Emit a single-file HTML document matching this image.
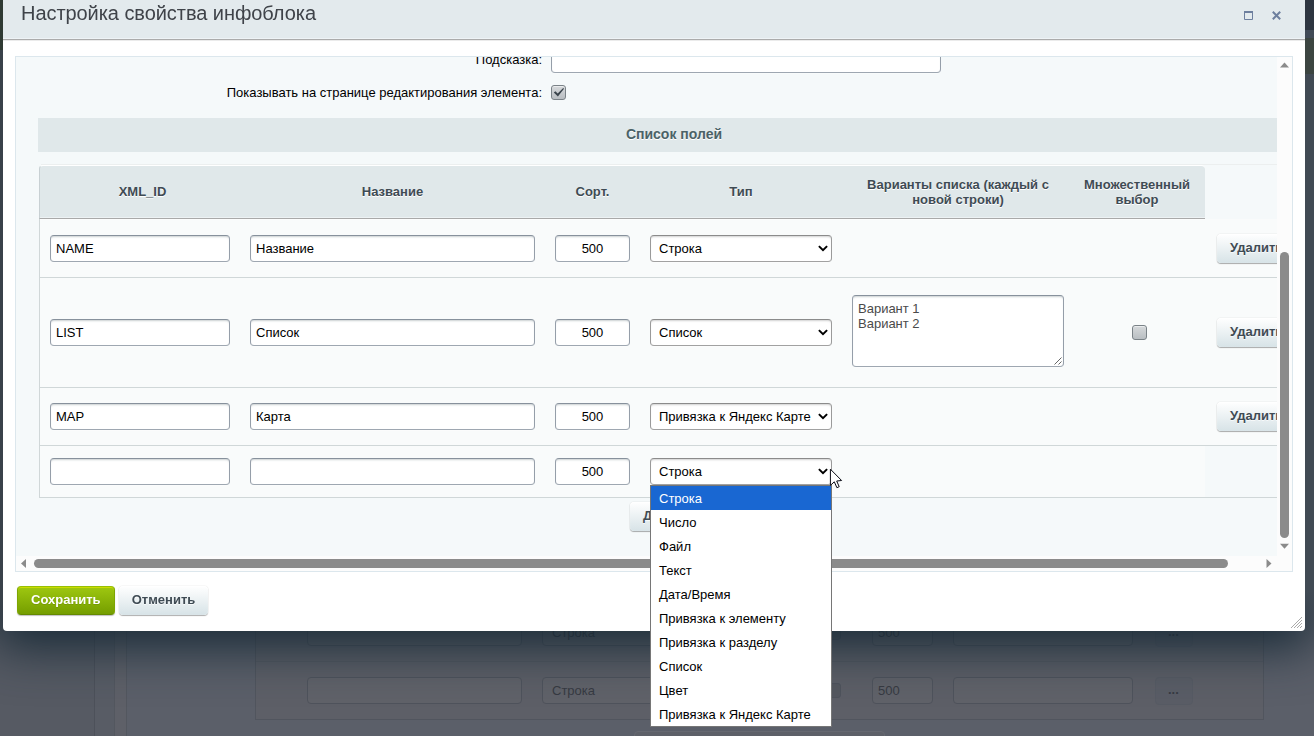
<!DOCTYPE html>
<html lang="ru">
<head>
<meta charset="utf-8">
<title>Настройка свойства инфоблока</title>
<style>
*{box-sizing:border-box;}
html,body{margin:0;padding:0;}
body{width:1314px;height:736px;overflow:hidden;position:relative;background:#5b5f69;font-family:"Liberation Sans",sans-serif;font-size:13px;color:#000;}
.abs{position:absolute;}
/* dimmed page behind */
#bgpage{position:absolute;left:0;top:0;width:1314px;height:736px;overflow:hidden;}
#bgpage .ghost{position:absolute;border:1px solid #4f535c;border-radius:4px;background:#606269;}
#bgpage .gtxt{position:absolute;color:#373a42;font-size:13px;line-height:15px;white-space:nowrap;}
/* dialog */
#dlg{position:absolute;left:3px;top:-20px;width:1302px;height:651px;background:#fff;border-radius:4px;box-shadow:0 8px 50px 8px rgba(24,42,55,1);}
#head{position:absolute;left:0;top:0;width:1302px;height:60px;background:#e3eaed;border-bottom:1px solid #ababab;border-radius:4px 4px 0 0;box-shadow:inset 0 -1px 0 #eef3f6,0 1px 0 #ebebeb;}
#title{position:absolute;left:18px;top:20px;letter-spacing:-0.06px;font-size:20px;line-height:26px;color:#3f4349;white-space:nowrap;}
#content{position:absolute;left:12px;top:76px;width:1278px;height:516px;border:1px solid #dce7ed;background:#f5f9fa;overflow:hidden;}
#inner{position:absolute;left:0;top:0;width:1261px;height:499px;overflow:hidden;}
.inp{position:absolute;height:27px;background:#fff;border:1px solid;border-color:#87919c #959ea9 #9ea7b1 #959ea9;border-radius:4px;box-shadow:0 1px 0 0 rgba(255,255,255,.3),inset 0 2px 2px -1px rgba(180,188,191,.7);font-size:13px;line-height:25px;padding:0 5px;white-space:nowrap;overflow:hidden;color:#000;}
.lbl{position:absolute;white-space:nowrap;font-size:13px;line-height:15px;color:#000;text-align:right;}
.btn{position:absolute;height:29px;border-radius:4px;background:linear-gradient(to bottom,#fff,#d7e3e7);box-shadow:0 0 1px rgba(0,0,0,.3),0 1px 1px rgba(0,0,0,.3),inset 0 1px #fff,inset 0 0 1px rgba(255,255,255,.5);color:#3f4b54;font-weight:bold;font-size:13px;line-height:27px;padding:0 13px;text-shadow:0 1px rgba(255,255,255,.7);white-space:nowrap;}
.hcell{position:absolute;top:0;height:52px;display:flex;align-items:center;justify-content:center;text-align:center;font-weight:bold;font-size:13px;line-height:15px;color:#3f4b54;text-shadow:0 1px #fff;}
.rowline{position:absolute;left:24px;height:1px;background:#d0d7d8;}
.cellbg{position:absolute;background:#f9fbfb;}
.chev{position:absolute;width:10px;height:7px;}

.cb{position:absolute;width:15px;height:15px;border-radius:3px;border:1px solid #7a8287;background:linear-gradient(to bottom,#d6d9db,#b9bec2);box-shadow:inset 0 1px 0 rgba(255,255,255,.5);}
.cb svg{position:absolute;left:-1px;top:-1px;}
.band{position:absolute;background:#e0e8ea;color:#4b6267;font-weight:bold;font-size:14px;line-height:32px;text-align:center;text-shadow:0 1px #fff;}
.sel{padding-left:8px;border-color:#8b8b8b #9a9a9a #a1a1a1 #9a9a9a;box-shadow:0 1px 0 0 rgba(255,255,255,.3),inset 0 2px 2px -1px rgba(190,190,190,.7);}
.sel .chev{right:3.3px;top:9px;}
.ta{white-space:normal;line-height:15px;padding:5px 5px;color:#4a4a4a;}
.ta .grip{position:absolute;right:1px;bottom:1px;}
.sbar{position:absolute;background:#fcfcfc;}
.thumb{position:absolute;background:#8b8b8b;border-radius:4.5px;}
#dd{position:absolute;left:650px;top:485px;width:182px;height:242px;border:1px solid #767676;background:#fff;font-size:13px;}
#dd div{height:24px;line-height:26px;padding-left:8px;white-space:nowrap;color:#000;}
#dd div.hl{background:#1967d2;color:#fff;}
.btnsave{position:absolute;height:29px;border-radius:4px;border:1px solid;border-color:#97c004 #7ea502 #648900;background:linear-gradient(to bottom,#9ec710,#759e00);box-shadow:0 1px 1px rgba(0,0,0,.25),inset 0 1px 0 #cbdc00;color:#fff;font-weight:bold;font-size:13px;line-height:26px;padding:0 13px;text-shadow:0 1px rgba(0,0,0,.1);white-space:nowrap;}
</style>
</head>
<body>
<div id="bgpage">
  <div class="abs" style="left:0;top:0;width:94px;height:736px;background:#565a63;"></div>
  <div class="abs" style="left:94px;top:0;width:21px;height:736px;background:#585c65;border-left:1px solid #4d515a;"></div>
  <div class="abs" style="left:114px;top:0;width:13px;height:736px;background:#5e6068;border-left:1px solid #53575f;border-right:1px solid #53575f;"></div>
  <div class="abs" style="left:255px;top:560px;width:1009px;height:160px;border:1px solid #51555e;background:#5d5f67;"></div>
  <div class="abs" style="left:256px;top:661px;width:1007px;height:1px;background:#575a62;"></div>
  <div class="ghost" style="left:307px;top:619px;width:215px;height:27px;"></div>
  <div class="ghost" style="left:542px;top:619px;width:290px;height:27px;"></div>
  <div class="gtxt" style="left:552px;top:625px;">Строка</div>
  <div class="ghost" style="left:872px;top:619px;width:61px;height:27px;"></div>
  <div class="gtxt" style="left:878px;top:625px;">500</div>
  <div class="ghost" style="left:953px;top:619px;width:180px;height:27px;"></div>
  <div class="ghost" style="left:1155px;top:619px;width:38px;height:28px;background:#5a5d66;border-color:#575b64;"></div>
  <div class="gtxt" style="left:1168px;top:624px;font-weight:bold;">...</div>
  <div class="ghost" style="left:307px;top:677px;width:215px;height:27px;"></div>
  <div class="ghost" style="left:542px;top:677px;width:290px;height:27px;"></div>
  <div class="gtxt" style="left:552px;top:683px;">Строка</div>
  <div class="ghost" style="left:872px;top:677px;width:61px;height:27px;"></div>
  <div class="gtxt" style="left:878px;top:683px;">500</div>
  <div class="ghost" style="left:953px;top:677px;width:180px;height:27px;"></div>
  <div class="ghost" style="left:1155px;top:677px;width:38px;height:28px;background:#5a5d66;border-color:#575b64;"></div>
  <div class="gtxt" style="left:1168px;top:682px;font-weight:bold;">...</div>
  <div class="ghost" style="left:634px;top:731px;width:251px;height:29px;background:#5d6068;border-color:#656870;"></div>
  <div class="ghost" style="left:826px;top:683px;width:15px;height:15px;border-radius:3px;background:#55585f;"></div>
  <div class="ghost" style="left:826px;top:625px;width:15px;height:15px;border-radius:3px;background:#55585f;"></div>
</div>
<div id="dlg">
  <div id="head">
    <div id="title" style="will-change:transform;">Настройка свойства инфоблока</div>
  </div>
  <div id="content">
    <div id="inner">
    <div class="lbl" style="left:0;width:526px;top:-5px;">Подсказка:</div>
    <div class="inp" style="left:535px;top:-11px;width:390px;"></div>
    <div class="lbl" style="left:0;width:526px;top:28px;">Показывать на странице редактирования элемента:</div>
    <div class="cb on" style="left:535px;top:28px;"><svg width="15" height="15" viewBox="0 0 15 15"><path d="M2.8 7.6 L4.4 6.3 L6.7 8.5 L12.2 3.0 L13.0 3.8 L6.9 11.4 Z" fill="#3a444c"/></svg></div>
    <div class="band" style="left:22px;top:61px;width:1272px;height:34px;">Список полей</div>
    <div class="abs" style="left:25px;top:107px;width:1280px;height:1px;background:#ecefef;"></div>
    <div class="cellbg" style="left:24px;top:162px;width:1280px;height:226px;"></div>
    <div class="cellbg" style="left:24px;top:389px;width:1165px;height:51px;"></div>
    <div class="abs" style="left:23px;top:108px;width:1166px;height:54px;background:#e0e8ea;border-radius:4px 4px 0 0;border-top:1px solid #fff;border-left:1px solid #c8d0d3;border-bottom:1px solid #a9a9a9;box-shadow:inset 0 -1px 0 #edf2f4,0 1px 0 #fcfdfd;"></div>
    <div class="hcell" style="left:26.5px;top:108px;width:200px;height:53px;">XML_ID</div>
    <div class="hcell" style="left:224px;top:108px;width:305px;height:53px;">Название</div>
    <div class="hcell" style="left:529px;top:108px;width:95px;height:53px;">Сорт.</div>
    <div class="hcell" style="left:624px;top:108px;width:202px;height:53px;">Тип</div>
    <div class="hcell" style="left:826px;top:108px;width:232px;height:53px;">Варианты списка (каждый с<br>новой строки)</div>
    <div class="hcell" style="left:1058px;top:108px;width:126px;height:53px;">Множественный<br>выбор</div>
    <div class="abs" style="left:23px;top:162px;width:1px;height:279px;background:#d0d7d8;"></div>
    <div class="rowline" style="left:23px;top:220px;width:1280px;"></div>
    <div class="rowline" style="left:23px;top:330px;width:1280px;"></div>
    <div class="rowline" style="left:23px;top:388px;width:1280px;"></div>
    <div class="rowline" style="left:23px;top:440px;width:1280px;"></div>
    <div class="inp" style="left:34px;top:178px;width:180px;">NAME</div>
    <div class="inp" style="left:234px;top:178px;width:285px;">Название</div>
    <div class="inp" style="left:539px;top:178px;width:75px;text-align:center;">500</div>
    <div class="inp sel" style="left:634px;top:178px;width:182px;">Строка<svg class="chev" viewBox="0 0 10 7"><path d="M0.9 1.1 L5 5.2 L9.1 1.1" fill="none" stroke="#000" stroke-width="2"/></svg></div>
    <div class="btn" style="left:1201px;top:177px;">Удалить</div>
    <div class="inp" style="left:34px;top:262px;width:180px;">LIST</div>
    <div class="inp" style="left:234px;top:262px;width:285px;">Список</div>
    <div class="inp" style="left:539px;top:262px;width:75px;text-align:center;">500</div>
    <div class="inp sel" style="left:634px;top:262px;width:182px;">Список<svg class="chev" viewBox="0 0 10 7"><path d="M0.9 1.1 L5 5.2 L9.1 1.1" fill="none" stroke="#000" stroke-width="2"/></svg></div>
    <div class="btn" style="left:1201px;top:261px;">Удалить</div>
    <div class="inp" style="left:34px;top:346px;width:180px;">MAP</div>
    <div class="inp" style="left:234px;top:346px;width:285px;">Карта</div>
    <div class="inp" style="left:539px;top:346px;width:75px;text-align:center;">500</div>
    <div class="inp sel" style="left:634px;top:346px;width:182px;">Привязка к Яндекс Карте<svg class="chev" viewBox="0 0 10 7"><path d="M0.9 1.1 L5 5.2 L9.1 1.1" fill="none" stroke="#000" stroke-width="2"/></svg></div>
    <div class="btn" style="left:1201px;top:345px;">Удалить</div>
    <div class="inp" style="left:34px;top:401px;width:180px;"></div>
    <div class="inp" style="left:234px;top:401px;width:285px;"></div>
    <div class="inp" style="left:539px;top:401px;width:75px;text-align:center;">500</div>
    <div class="inp sel" style="left:634px;top:401px;width:182px;">Строка<svg class="chev" viewBox="0 0 10 7"><path d="M0.9 1.1 L5 5.2 L9.1 1.1" fill="none" stroke="#000" stroke-width="2"/></svg></div>
    <div class="inp ta" style="left:836px;top:238px;width:212px;height:72px;">Вариант 1<br>Вариант 2<svg class="grip" width="9" height="9" viewBox="0 0 9 9"><path d="M8.5 1.5 L1.5 8.5 M8.5 5.5 L5.5 8.5" stroke="#666" stroke-width="1" fill="none"/></svg></div>
    <div class="cb" style="left:1116px;top:268px;"></div>
    <div class="btn" style="left:614px;top:445px;">Добавить</div>
    </div>
    <div class="sbar" style="left:1261px;top:0;width:15px;height:499px;"></div>
    <div class="sbar" style="left:0;top:499px;width:1276px;height:15px;"></div>
    <svg class="abs" style="left:1261px;top:0;" width="15" height="15" viewBox="0 0 15 15"><path d="M3 10.6 L12 10.6 L7.5 5.6 Z" fill="#8b8b8b"/></svg>
    <svg class="abs" style="left:1261px;top:484px;" width="15" height="15" viewBox="0 0 15 15"><path d="M3 2.8 L12 2.8 L7.5 7.8 Z" fill="#8b8b8b"/></svg>
    <div class="thumb" style="left:1264.3px;top:195px;width:8.5px;height:286px;"></div>
    <svg class="abs" style="left:0;top:499px;" width="15" height="15" viewBox="0 0 15 15"><path d="M10 3 L10 12 L5 7.5 Z" fill="#8b8b8b"/></svg>
    <svg class="abs" style="left:1246px;top:499px;" width="15" height="15" viewBox="0 0 15 15"><path d="M4.5 3 L4.5 12 L9.5 7.5 Z" fill="#8b8b8b"/></svg>
    <div class="thumb" style="left:18px;top:502.3px;width:1194px;height:8.5px;"></div>
  </div>
  <div class="btnsave" style="left:14px;top:606px;will-change:transform;">Сохранить</div>
  <div class="btn" style="left:116px;top:606px;width:89px;padding:0;text-align:center;will-change:transform;">Отменить</div>
  <svg class="abs" style="left:1285.5px;top:635px;" width="14" height="14" viewBox="0 0 14 14"><path d="M13 2 L2 13 M13 5 L5 13 M13 8 L8 13 M13 11 L11 13" stroke="#aaa" stroke-width="1" fill="none"/></svg>
  <svg class="abs" style="left:1241px;top:31px;" width="9" height="9" viewBox="0 0 9 9"><path d="M0.5 1 H8.5 V8.5 H0.5 Z" fill="none" stroke="#6d7f9e" stroke-width="1"/><rect x="0" y="0" width="9" height="2" fill="#6d7f9e"/></svg>
  <svg class="abs" style="left:1269px;top:31px;" width="9" height="9" viewBox="0 0 9 9"><path d="M0.8 0.8 L8.2 8.2 M8.2 0.8 L0.8 8.2" stroke="#6d7f9e" stroke-width="2" fill="none"/></svg>
</div>
<div class="abs" style="left:0;top:0;width:3px;height:640px;background:linear-gradient(to bottom,#2f3a33 0,#2f3a33 50px,#39414a 50px,#39414a 600px,rgba(57,65,74,0) 640px);"></div>
<div class="abs" style="left:1305px;top:0;width:9px;height:640px;background:linear-gradient(to bottom,#2d3540 0,#2d3540 30px,#414a56 30px,#414a56 38px,#3c4541 38px,#3c4541 74px,#414a54 74px,#414a54 590px,rgba(65,74,84,0) 640px);"></div>
<div id="dd"><div class="hl">Строка</div><div>Число</div><div>Файл</div><div>Текст</div><div>Дата/Время</div><div>Привязка к элементу</div><div>Привязка к разделу</div><div>Список</div><div>Цвет</div><div>Привязка к Яндекс Карте</div></div>
<svg class="abs" style="left:829px;top:468px;" width="14" height="22" viewBox="0 0 14 22"><path d="M1.4 1.2 L1.4 17.4 L5.3 13.8 L7.9 19.7 L10.2 18.7 L7.7 13 L12.6 12.5 Z" fill="#fff" stroke="#0a0a14" stroke-width="1" stroke-linejoin="miter"/></svg>
</body>
</html>
